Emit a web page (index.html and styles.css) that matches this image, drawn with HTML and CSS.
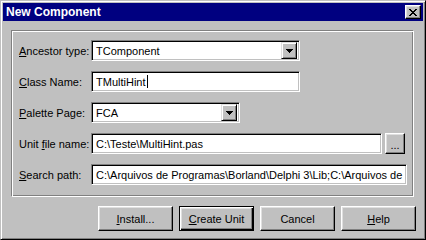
FILE: index.html
```html
<!DOCTYPE html>
<html>
<head>
<meta charset="utf-8">
<link rel="stylesheet" href="styles.css">
</head>
<body>
<div class="window">
  <div class="titlebar">
    <span class="title">New Component</span>
    <span class="close"><svg width="8" height="7" viewBox="0 0 8 7"><path d="M0 0h2v1h1v1h2v-1h1v-1h2v1h-1v1h-1v1h-1v1h1v1h1v1h1v1h-2v-1h-1v-1h-2v1h-1v1h-2v-1h1v-1h1v-1h1v-1h-1v-1h-1v-1h-1z" fill="#000"/></svg></span>
  </div>
  <div class="body">
    <div class="group">
      <label class="lbl"><u>A</u>ncestor type:</label>
      <div class="combo w-anc"><span class="text">TComponent</span><span class="drop"><svg width="7" height="4" viewBox="0 0 7 4"><path d="M0 0h7v1h-1v1h-1v1h-1v1h-1v-1h-1v-1h-1v-1h-1z" fill="#000"/></svg></span></div>

      <label class="lbl"><u>C</u>lass Name:</label>
      <div class="edit w-cls"><span class="text">TMultiHint<span class="caret"></span></span></div>

      <label class="lbl"><u>P</u>alette Page:</label>
      <div class="combo w-pal"><span class="text">FCA</span><span class="drop"><svg width="7" height="4" viewBox="0 0 7 4"><path d="M0 0h7v1h-1v1h-1v1h-1v1h-1v-1h-1v-1h-1v-1h-1z" fill="#000"/></svg></span></div>

      <label class="lbl">Unit <u>f</u>ile name:</label>
      <div class="pair">
        <div class="edit w-unit"><span class="text">C:\Teste\MultiHint.pas</span></div>
        <button class="btn dots">...</button>
      </div>

      <label class="lbl"><u>S</u>earch path:</label>
      <div class="edit w-search"><span class="text">C:\Arquivos de Programas\Borland\Delphi 3\Lib;C:\Arquivos de</span></div>
    </div>
    <div class="buttons">
      <button class="btn push"><u>I</u>nstall...</button>
      <button class="btn push default"><u>C</u>reate Unit</button>
      <button class="btn push">Cancel</button>
      <button class="btn push"><u>H</u>elp</button>
    </div>
  </div>
</div>
</body>
</html>
```
FILE: styles.css
```css
html, body {
  margin: 0;
  padding: 0;
  background: #c0c0c0;
}
body {
  font-family: "Liberation Sans", Arial, sans-serif;
  font-size: 11px;
  color: #000;
}
.window {
  width: 426px;
  height: 240px;
  box-sizing: border-box;
  border: 1px solid;
  border-color: #c0c0c0 #000 #000 #c0c0c0;
  box-shadow: inset 1px 1px #fff, inset -1px -1px #808080;
  padding: 2px;
  background: #c0c0c0;
  display: flex;
  flex-direction: column;
}
.titlebar {
  height: 18px;
  flex: none;
  background: #000080;
  color: #fff;
  display: flex;
  align-items: center;
  justify-content: space-between;
  padding: 0 2px 0 3px;
}
.title {
  font-weight: bold;
  font-size: 12px;
}
.close {
  width: 16px;
  height: 14px;
  box-sizing: border-box;
  background: #c0c0c0;
  border: 1px solid;
  border-color: #fff #000 #000 #fff;
  box-shadow: inset -1px -1px #808080, inset 1px 1px #dfdfdf;
  display: flex;
  align-items: center;
  justify-content: center;
}
.close svg { display: block; }
.body {
  flex: 1;
  padding: 9px 0 0 8px;
}
.group {
  width: 403px;
  height: 167px;
  box-sizing: border-box;
  border: 1px solid;
  border-color: #808080 #fff #fff #808080;
  box-shadow: inset 1px 1px #fff, inset -1px -1px #808080;
  padding: 9px 0 0 7px;
  display: grid;
  grid-template-columns: 72px auto;
  grid-auto-rows: 21px;
  row-gap: 10px;
  align-items: center;
}
.lbl { white-space: nowrap; }
.edit, .combo {
  height: 21px;
  box-sizing: border-box;
  background: #fff;
  border: 1px solid;
  border-color: #808080 #fff #fff #808080;
  box-shadow: inset 1px 1px #000, inset -1px -1px #c0c0c0;
  display: flex;
  align-items: center;
  padding: 2px 2px 2px 4px;
  font-size: 11px;
  white-space: nowrap;
  overflow: hidden;
}
.combo { padding-right: 2px; }
.text { flex: 1; display: flex; align-items: center; }
.caret {
  display: inline-block;
  width: 1px;
  height: 13px;
  background: #000;
  margin-left: 1px;
}
.drop {
  flex: none;
  width: 16px;
  height: 17px;
  box-sizing: border-box;
  background: #c0c0c0;
  border: 1px solid;
  border-color: #dfdfdf #000 #000 #dfdfdf;
  box-shadow: inset 1px 1px #fff, inset -1px -1px #808080;
  display: flex;
  align-items: center;
  justify-content: center;
}
.drop svg { display: block; }
.w-anc { width: 209px; }
.w-cls { width: 209px; }
.w-pal { width: 149px; }
.w-unit { width: 291px; }
.w-search { width: 316px; }
.pair {
  display: flex;
  gap: 3px;
  align-items: center;
}
.btn {
  font-family: "Liberation Sans", Arial, sans-serif;
  font-size: 11px;
  color: #000;
  background: #c0c0c0;
  box-sizing: border-box;
  border: 1px solid;
  border-color: #fff #000 #000 #fff;
  box-shadow: inset -1px -1px #808080, inset 1px 1px #dfdfdf;
  padding: 0;
  margin: 0;
}
.dots {
  width: 20px;
  height: 21px;
  padding-top: 3px;
}
.buttons {
  display: flex;
  gap: 6px;
  margin: 9px 0 0 87px;
}
.push {
  width: 75px;
  height: 25px;
}
.push.default {
  border-color: #000;
  box-shadow: inset 1px 1px #fff, inset -1px -1px #000, inset -2px -2px #808080, inset 2px 2px #dfdfdf;
  outline: none;
}
u { text-decoration: underline; text-underline-offset: 1px; }
```
